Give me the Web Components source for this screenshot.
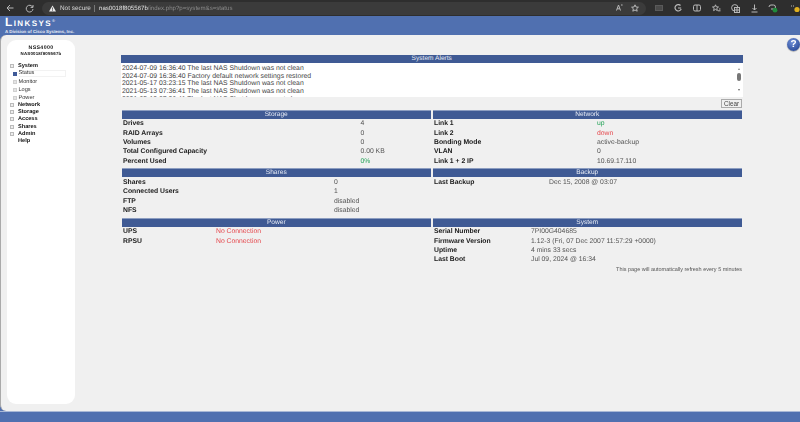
<!DOCTYPE html>
<html>
<head>
<meta charset="utf-8">
<title>NSS4000</title>
<style>
  html, body { margin: 0; padding: 0; height: 100%; overflow: hidden; background: #f0f0f0; }
  body { display: flex; flex-direction: column; height: 422px; font-family: "Liberation Sans", Arial, sans-serif; text-rendering: geometricPrecision; }
</style>
</head>
<body>
<browser-bar></browser-bar>
<nas-header></nas-header>
<nas-shell>
  <nas-sidebar slot="side"></nas-sidebar>
  <alerts-box>
    <div>2024-07-09 16:36:40 The last NAS Shutdown was not clean</div>
    <div>2024-07-09 16:36:40 Factory default network settings restored</div>
    <div>2021-05-17 03:23:15 The last NAS Shutdown was not clean</div>
    <div>2021-05-13 07:36:41 The last NAS Shutdown was not clean</div>
    <div>2021-05-13 07:36:41 The last NAS Shutdown was not clean</div>
  </alerts-box>
  <status-grid>
    <status-panel title="Storage" col="239" h="58.6">
      <status-row label="Drives" value="4"></status-row>
      <status-row label="RAID Arrays" value="0"></status-row>
      <status-row label="Volumes" value="0"></status-row>
      <status-row label="Total Configured Capacity" value="0.00 KB"></status-row>
      <status-row label="Percent Used" value="0%" tone="good"></status-row>
    </status-panel>
    <status-panel title="Network" col="164.5" h="58.6">
      <status-row label="Link 1" value="up" tone="good"></status-row>
      <status-row label="Link 2" value="down" tone="bad"></status-row>
      <status-row label="Bonding Mode" value="active-backup"></status-row>
      <status-row label="VLAN" value="0"></status-row>
      <status-row label="Link 1 + 2 IP" value="10.69.17.110"></status-row>
    </status-panel>
    <status-panel title="Shares" col="212.5" h="49.4">
      <status-row label="Shares" value="0"></status-row>
      <status-row label="Connected Users" value="1"></status-row>
      <status-row label="FTP" value="disabled"></status-row>
      <status-row label="NFS" value="disabled"></status-row>
    </status-panel>
    <status-panel title="Backup" col="116.5" h="49.4">
      <status-row label="Last Backup" value="Dec 15, 2008 @ 03:07"></status-row>
    </status-panel>
    <status-panel title="Power" col="94.5" h="46">
      <status-row label="UPS" value="No Connection" tone="bad"></status-row>
      <status-row label="RPSU" value="No Connection" tone="bad"></status-row>
    </status-panel>
    <status-panel title="System" col="98.5" h="46">
      <status-row label="Serial Number" value="7PI00G404685"></status-row>
      <status-row label="Firmware Version" value="1.12-3 (Fri, 07 Dec 2007 11:57:29 +0000)"></status-row>
      <status-row label="Uptime" value="4 mins 33 secs"></status-row>
      <status-row label="Last Boot" value="Jul 09, 2024 @ 16:34"></status-row>
    </status-panel>
  </status-grid>
  <div style="font-size:5.5px;color:#555;text-align:right;width:621.5px;margin-top:2px">This page will automatically refresh every 5 minutes</div>
  <help-badge slot="over"></help-badge>
</nas-shell>
<nas-footer></nas-footer>

<script>
class BrowserBar extends HTMLElement {
  constructor() {
    super();
    this.attachShadow({ mode: "open" });
    this.shadowRoot.innerHTML = `
      <style>
        :host { display: flex; align-items: center; height: 16px; background: #2e2e2e; color: #ddd; font-size: 6.1px; flex: none; overflow: hidden; }
        svg { display: block; flex: none; fill: none; stroke: #b8b8b8; stroke-width: 1; }
        .nav { display: flex; gap: 11px; padding-left: 6px; }
        .addr { display: flex; align-items: center; width: 604px; flex: none; height: 13px; margin-left: 8px; padding-left: 7px; box-sizing: border-box; background: #3b3b3b; border-radius: 7px; filter: blur(.2px); }
        .warn { margin-right: 4px; }
        .warn-label { color: #d8d8d8; font-size: 6.4px; width: 28px; white-space: nowrap; }
        .sep { width: 1px; height: 7px; background: #777; margin: 0 4px 0 6px; }
        .host { color: #e2e2e2; }
        .path { color: #8a8a8a; }
        .spring { flex: 1; }
        .tools { display: flex; align-items: center; padding-left: 3.500px; }
        .cell { width: 19px; display: flex; justify-content: center; flex: none; }
        .cell.last { width: 10px; margin-left: 7.500px; }
        .read { display: flex; gap: 8.500px; padding-right: 7px; }
      </style>
      <div class="nav">
        <svg width="8" height="8" viewBox="0 0 8 8"><path d="M7.5 4H1M4 1 1 4l3 3"/></svg>
        <svg width="9" height="9" viewBox="0 0 9 9"><path d="M7.6 3A3.4 3.4 0 1 0 8 5M8 1v2.4H5.6"/></svg>
      </div>
      <div class="addr">
        <svg class="warn" width="7" height="7" viewBox="0 0 8 7" style="stroke:none;fill:#eee"><path d="M4 0 8 7H0Z"/><path d="M3.6 2.4h.8v2.4h-.8zM3.6 5.2h.8v.8h-.8z" fill="#333"/></svg>
        <span class="warn-label">Not secure</span>
        <span class="sep"></span>
        <span class="host">nas0018f805567b</span><span class="path">/index.php?p=system&amp;s=status</span>
        <span class="spring"></span>
        <div class="read">
          <svg width="7" height="7" viewBox="0 0 7 7"><path d="M.5 6.5 2.5 1l2 5.5M1.2 4.8h2.6M5 1h1.6"/></svg>
          <svg width="8" height="8" viewBox="0 0 8 8"><path d="M4 .8 5 3l2.4.2L5.600 4.800l.6 2.400L4 6 1.800 7.200l.6-2.400L.6 3.200 3 3Z"/></svg>
        </div>
      </div>
      <div class="tools">
        <div class="cell"><svg width="8" height="6" viewBox="0 0 8 6" style="stroke:#5a5a5a"><rect x=".5" y=".5" width="7" height="5" fill="#4a4a4a"/></svg></div>
        <div class="cell"><svg width="8" height="8" viewBox="0 0 8 8"><path d="M6.500 1.500A3.200 3.200 0 1 0 7.200 5M4 4h3.200" stroke-width="1.200"/></svg></div>
        <div class="cell"><svg width="8" height="8" viewBox="0 0 8 8"><rect x=".5" y="1" width="7" height="6" rx="1.500"/><path d="M4 1v6"/></svg></div>
        <div class="cell"><svg width="9" height="8" viewBox="0 0 9 8"><path d="M3.500.8 4.300 2.800l2.200.2-1.700 1.400.6 2.200-1.900-1.200L1.600 6.600l.6-2.200L.5 3l2.200-.2ZM6 6.800h2.500M7 5h1.500"/></svg></div>
        <div class="cell"><svg width="9" height="9" viewBox="0 0 9 9"><circle cx="3.800" cy="3.800" r="3.200"/><rect x="3.500" y="3.500" width="5" height="5" fill="#2e2e2e"/><path d="M6 4v4M3.800 6h4.400"/></svg></div>
        <div class="cell"><svg width="7" height="9" viewBox="0 0 7 9"><path d="M3.500.5v5.500M1.500 4l2 2 2-2M.5 8h6"/></svg></div>
        <div class="cell"><svg width="10" height="10" viewBox="0 0 10 10"><path d="M1 4a2 2 0 0 1 2-2h2.500a2 2 0 0 1 0 4H3"/><circle cx="7" cy="7.200" r="2.400" fill="#1f8a3b" stroke="none"/></svg></div>
        <div class="cell last"><svg width="10" height="9" viewBox="0 0 10 9"><path d="M1 2h4" stroke-dasharray="1 1" stroke-width="1.200"/><circle cx="7" cy="5.500" r="2.600" fill="#e0b020" stroke="none"/></svg></div>
      </div>
    `;
  }
}
customElements.define("browser-bar", BrowserBar);

class NasHeader extends HTMLElement {
  constructor() {
    super();
    this.attachShadow({ mode: "open" });
    this.shadowRoot.innerHTML = `
      <style>
        :host { display: block; height: 19px; background: #5070b0; color: #fff; flex: none; padding-left: 5px; box-sizing: border-box; overflow: hidden; }
        .logo { font-size: 12px; font-weight: 700; font-variant: small-caps; letter-spacing: 1.400px; line-height: 11px; padding-top: .840px; }
        .sub { font-size: 4.400px; font-weight: 700; line-height: 4px; margin-top: 1.700px; white-space: nowrap; color: #e6ebf5; }
        sup { font-size: 4px; vertical-align: 4px; line-height: 0; font-weight: 400; letter-spacing: 0; }
      </style>
      <div class="logo">Linksys<sup>&reg;</sup></div>
      <div class="sub">A Division of Cisco Systems, Inc.</div>
    `;
  }
}
customElements.define("nas-header", NasHeader);

class NasFooter extends HTMLElement {
  constructor() {
    super();
    this.attachShadow({ mode: "open" }).innerHTML = `
      <style>:host { display: block; height: 11px; background: #5070b0; flex: none; border-top: 1px solid #a9b8d6; box-sizing: border-box; }</style>
    `;
  }
}
customElements.define("nas-footer", NasFooter);

class NasShell extends HTMLElement {
  constructor() {
    super();
    this.attachShadow({ mode: "open" }).innerHTML = `
      <style>
        :host { display: flex; flex: 1; min-height: 0; position: relative; background: #5070b0; }
        .round { display: flex; flex: 1; background: #f0f0f0; border-radius: 6px 0 0 6px; border-left: 1px solid #aaa; padding: 5px 0 7px 6px; }
        .main { flex: 1; padding: 15.300px 0 0 45.500px; min-width: 0; filter: blur(.2px); }
      </style>
      <div class="round">
        <slot name="side"></slot>
        <div class="main"><slot></slot></div>
      </div>
      <slot name="over"></slot>
    `;
  }
}
customElements.define("nas-shell", NasShell);

class NasSidebar extends HTMLElement {
  constructor() {
    super();
    this.attachShadow({ mode: "open" }).innerHTML = `
      <style>
        :host { display: block; width: 68px; flex: none; background: #fff; border-radius: 9px; box-sizing: border-box; color: #111; padding-top: 4.500px; }
        .wrap { filter: blur(.2px); }
        .name { text-align: center; font-weight: 700; line-height: 6.500px; }
        .n1 { font-size: 5.200px; letter-spacing: .4px; }
        .n2 { font-size: 4.400px; letter-spacing: .2px; }
        ul { list-style: none; margin: 4px 0 0; padding: 0 0 0 3px; font-size: 5.600px; font-weight: 700; }
        li { display: flex; align-items: center; height: 7.200px; }
        li.sub { font-weight: 400; height: 8px; padding-left: 3px; color: #333; }
        li.top { height: 8px; }
        i { display: block; box-sizing: border-box; width: 4px; height: 4px; border: 1px solid #bbb; margin-right: 4px; flex: none; background: #eee; }
        li.sub i { margin-right: 1.500px; background: #e4e4e4; border-color: #d0d0d0; }
        li.on i { background: #3f5a98; border-color: #3f5a98; }
        li.on span { flex: 1; border: 1px solid #f2f2f2; border-left: 0; line-height: 5px; margin-right: 9px; }
        b { display: block; width: 4px; margin-right: 4px; }
      </style>
      <div class="wrap">
      <div class="name n1">NSS4000</div>
      <div class="name n2">NAS0018f805567b</div>
      <ul>
        <li class="top"><i></i>System</li>
        <li class="sub on"><i></i><span>Status</span></li>
        <li class="sub"><i></i>Monitor</li>
        <li class="sub"><i></i>Logs</li>
        <li class="sub"><i></i>Power</li>
        <li><i></i>Network</li>
        <li><i></i>Storage</li>
        <li><i></i>Access</li>
        <li><i></i>Shares</li>
        <li><i></i>Admin</li>
        <li><b></b>Help</li>
      </ul>
      </div>
    `;
  }
}
customElements.define("nas-sidebar", NasSidebar);

class AlertsBox extends HTMLElement {
  constructor() {
    super();
    this.attachShadow({ mode: "open" }).innerHTML = `
      <style>
        :host { display: block; width: 622.500px; font-size: 6.850px; color: #444; }
        .bar { height: 8px; line-height: 8px; background: #3f5a94; color: #e8ecf5; text-align: center; font-size: 6.600px; }
        .box { display: flex; height: 34px; background: #fff; overflow: hidden; }
        .lines { flex: 1; padding: 1.700px 0 0 1.500px; line-height: 7.650px; }
        .scroll { width: 9px; flex: none; display: flex; flex-direction: column; align-items: center; padding-top: 5px; box-sizing: border-box; }
        .up, .down { width: 0; height: 0; border-left: 1.500px solid transparent; border-right: 1.500px solid transparent; }
        .up { border-bottom: 2.500px solid #888; }
        .thumb { width: 4px; height: 8px; background: #777; border-radius: 2px; margin-top: 3px; }
        .down { border-top: 2.500px solid #666; margin-top: 8px; }
        .act { display: flex; justify-content: flex-end; height: 13.400px; padding: 1.700px 1px 0 0; box-sizing: border-box; }
        button { font: inherit; font-size: 6.300px; color: #444; background: #f0f0f0; border: 1px solid #aaa; padding: 0; width: 21px; height: 9px; line-height: 7px; }
      </style>
      <div class="bar">System Alerts</div>
      <div class="box">
        <div class="lines"><slot></slot></div>
        <div class="scroll"><div class="up"></div><div class="thumb"></div><div class="down"></div></div>
      </div>
      <div class="act"><button>Clear</button></div>
    `;
  }
}
customElements.define("alerts-box", AlertsBox);

class StatusGrid extends HTMLElement {
  constructor() {
    super();
    this.attachShadow({ mode: "open" }).innerHTML = `
      <style>
        :host { display: grid; grid-template-columns: 309.500px 309.500px; column-gap: 1.500px; margin-left: 1px; }
      </style>
      <slot></slot>
    `;
  }
}
customElements.define("status-grid", StatusGrid);

class StatusPanel extends HTMLElement {
  constructor() {
    super();
    this.attachShadow({ mode: "open" }).innerHTML = `
      <style>
        :host { display: block; }
        .bar { height: 8px; line-height: 8px; background: #3f5a94; box-shadow: 0 -1px 0 #8c9dc0; color: #e8ecf5; text-align: center; font-size: 6.600px; }
        .rows { padding-top: .700px; }
      </style>
      <div class="bar"></div>
      <div class="rows"><slot></slot></div>
    `;
  }
  connectedCallback() {
    this.shadowRoot.querySelector(".bar").textContent = this.getAttribute("title") || "";
    this.style.height = (this.getAttribute("h") || 50) + "px";
    this.style.setProperty("--col", (this.getAttribute("col") || "100") + "px");
  }
}
customElements.define("status-panel", StatusPanel);

class StatusRow extends HTMLElement {
  static get observedAttributes() {
    return ["label", "value", "tone"];
  }

  constructor() {
    super();
    this.attachShadow({ mode: "open" });
  }

  connectedCallback() {
    this.render();
  }

  attributeChangedCallback() {
    this.render();
  }

  render() {
    const tones = { good: "#27a45a", bad: "#e5484d" };
    const color = tones[this.getAttribute("tone")] || "#555";
    this.shadowRoot.innerHTML = `
      <style>
        :host { display: grid; grid-template-columns: var(--col, 100px) 1fr; height: 9.330px; line-height: 9.330px; font-size: 6.800px; white-space: nowrap; }
        .k { font-weight: 700; color: #1a1a1a; padding-left: 1.500px; }
        .v { color: ${color}; }
      </style>
      <div class="k">${this.getAttribute("label") || ""}</div>
      <div class="v">${this.getAttribute("value") || ""}</div>
    `;
  }
}
customElements.define("status-row", StatusRow);

class HelpBadge extends HTMLElement {
  constructor() {
    super();
    this.attachShadow({ mode: "open" }).innerHTML = `
      <style>
        :host { position: absolute; right: 0; top: 3px; width: 13px; height: 13px; border-radius: 50%; background: radial-gradient(circle at 40% 30%, #6f8fd8, #2f4f9c 75%); color: #fff; font-size: 10px; font-weight: 700; text-align: center; line-height: 13px; box-shadow: 0 .5px 1px #777; }
      </style>
      ?
    `;
  }
}
customElements.define("help-badge", HelpBadge);
</script>
</body>
</html>
